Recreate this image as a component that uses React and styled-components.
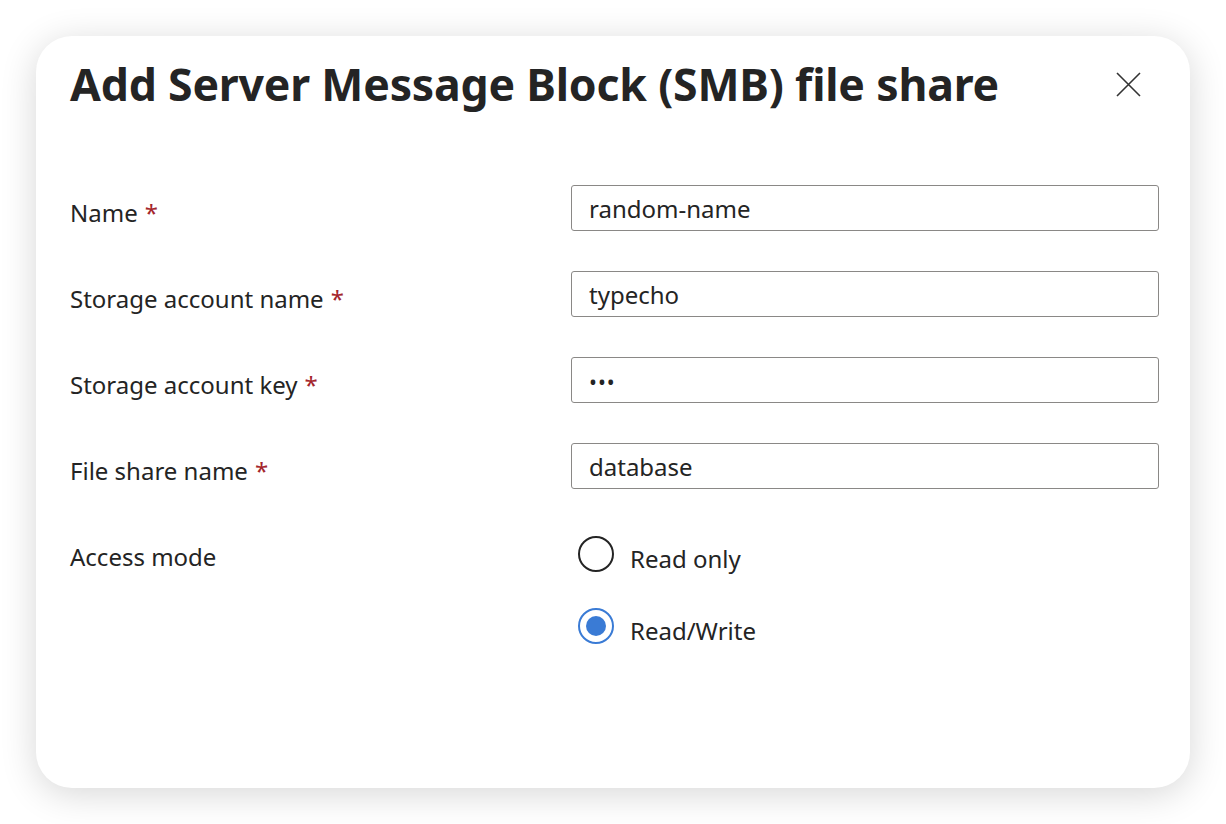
import React from "react";
import styled, { createGlobalStyle } from "styled-components";

const Global = createGlobalStyle`
  html, body { margin: 0; padding: 0; background: #ffffff; }
  body { font-family: "Noto Sans", "Open Sans", sans-serif; color: #242424; }
`;

const Page = styled.div`
  width: 1226px;
  height: 824px;
  padding: 36px;
  box-sizing: border-box;
`;

const Card = styled.div`
  width: 1154px;
  height: 752px;
  box-sizing: border-box;
  background: #fff;
  border-radius: 36px;
  box-shadow: 0 6px 36px rgba(0, 0, 0, 0.16);
  padding: 21px 34px 0 34px;
  display: flex;
  flex-direction: column;
`;

const Header = styled.div`
  display: flex;
  align-items: center;
  justify-content: space-between;
`;

const Title = styled.h1`
  margin: 0;
  font-size: 44.6px;
  font-weight: 700;
  line-height: 54px;
  color: #242424;
  letter-spacing: -0.2px;
`;

const CloseButton = styled.button`
  border: 0;
  background: transparent;
  padding: 0;
  width: 28px;
  height: 28px;
  margin-right: 14px;
  display: flex;
  align-items: center;
  justify-content: center;
  cursor: pointer;
`;

const Form = styled.div`
  margin-top: 74px;
  display: grid;
  grid-template-columns: 501px 588px;
  row-gap: 40px;
`;

const Label = styled.div`
  font-size: 24px;
  line-height: 46px;
  height: 46px;
  color: #242424;
  padding-top: 5px;
  box-sizing: border-box;
  white-space: nowrap;
`;

const Required = styled.span`
  color: #a4262c;
  margin-left: 7px;
`;

const Input = styled.div`
  height: 46px;
  box-sizing: border-box;
  border: 1.5px solid #8a8886;
  border-radius: 3px;
  padding: 2px 17px 0;
  font-size: 24px;
  line-height: 41px;
  color: #242424;
`;

const Dots = styled.span`
  letter-spacing: 1px;
  font-size: 21px;
`;

const RadioGroup = styled.div`
  display: flex;
  flex-direction: column;
  gap: 36px;
  padding-top: 7px;
  padding-left: 7px;
`;

const RadioItem = styled.label`
  display: flex;
  align-items: center;
  height: 36px;
  gap: 16px;
  font-size: 24px;
  color: #242424;
`;

const RadioText = styled.span`
  line-height: 36px;
  padding-top: 9px;
`;

const RadioCircle = styled.span`
  width: 36px;
  height: 36px;
  flex: none;
  box-sizing: border-box;
  border-radius: 50%;
  border: 2px solid ${(p) => (p.$checked ? "#3a7bd5" : "#242424")};
  display: flex;
  align-items: center;
  justify-content: center;
  &::after {
    content: "";
    display: ${(p) => (p.$checked ? "block" : "none")};
    width: 20px;
    height: 20px;
    border-radius: 50%;
    background: #3a7bd5;
  }
`;

const fields = [
  { label: "Name", value: "random-name" },
  { label: "Storage account name", value: "typecho" },
  { label: "Storage account key", value: "•••", secret: true },
  { label: "File share name", value: "database" },
];

export default function App() {
  return (
    <Page>
      <Global />
      <Card>
        <Header>
          <Title>Add Server Message Block (SMB) file share</Title>
          <CloseButton aria-label="Close">
            <svg width="25" height="25" viewBox="0 0 25 25">
              <path d="M1 1 L24 24 M24 1 L1 24" stroke="#333" strokeWidth="1.6" fill="none" />
            </svg>
          </CloseButton>
        </Header>
        <Form>
          {fields.map((f) => (
            <React.Fragment key={f.label}>
              <Label>
                {f.label}
                <Required>*</Required>
              </Label>
              <Input>{f.secret ? <Dots>{f.value}</Dots> : f.value}</Input>
            </React.Fragment>
          ))}
          <Label>Access mode</Label>
          <RadioGroup>
            <RadioItem>
              <RadioCircle />
              <RadioText>Read only</RadioText>
            </RadioItem>
            <RadioItem>
              <RadioCircle $checked />
              <RadioText>Read/Write</RadioText>
            </RadioItem>
          </RadioGroup>
        </Form>
      </Card>
    </Page>
  );
}
